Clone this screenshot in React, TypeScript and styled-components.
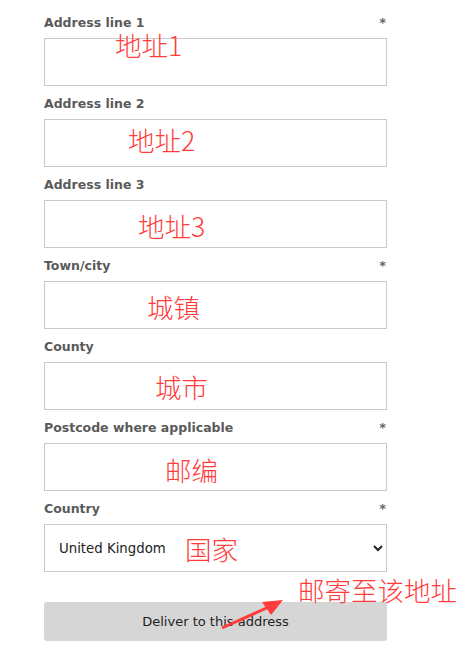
import React from 'react';
import styled, { createGlobalStyle } from 'styled-components';

const GlobalStyle = createGlobalStyle`
  html, body {
    margin: 0;
    padding: 0;
    background: #ffffff;
  }
  body {
    font-family: 'DejaVu Sans', 'Liberation Sans', sans-serif;
  }
`;

const Page = styled.div`
  position: relative;
  width: 471px;
  height: 645px;
  overflow: hidden;
  padding: 13px 0 0 44px;
  box-sizing: border-box;
`;

const Form = styled.form`
  width: 343px;
  display: flex;
  flex-direction: column;
`;

const Field = styled.div`
  display: flex;
  flex-direction: column;
  margin-bottom: 8px;
`;

const LabelRow = styled.div`
  display: flex;
  justify-content: space-between;
  align-items: center;
  height: 18px;
  margin-bottom: 7px;
`;

const Label = styled.label`
  font-size: 12.5px;
  font-weight: 700;
  color: #5a5a5a;
`;

const Required = styled.span`
  font-size: 13px;
  font-weight: 700;
  color: #666;
  padding-right: 1px;
`;

const TextInput = styled.input`
  height: 48px;
  box-sizing: border-box;
  border: 1px solid #c9c9c9;
  border-radius: 0;
  padding: 0 14px;
  font-family: inherit;
  font-size: 13px;
  outline: none;
`;

const Select = styled.select`
  height: 48px;
  box-sizing: border-box;
  border: 1px solid #c9c9c9;
  border-radius: 0;
  padding: 0 10px;
  font-family: inherit;
  font-size: 13.3px;
  color: #222;
  background: #fff;
  outline: none;
`;

const Button = styled.button`
  margin-top: 22px;
  height: 39px;
  border: none;
  border-radius: 3px;
  background: #d6d6d6;
  color: #222;
  font-family: inherit;
  font-size: 13px;
  cursor: pointer;
`;

const Note = styled.span<{ $x: number; $y: number }>`
  position: absolute;
  left: ${({ $x }) => $x}px;
  top: ${({ $y }) => $y}px;
  font-family: 'Noto Sans CJK SC', sans-serif;
  font-weight: 300;
  font-size: 26.5px;
  line-height: 30px;
  color: #ff3b3b;
  pointer-events: none;
  white-space: nowrap;
`;

const Arrow = styled.svg`
  position: absolute;
  left: 215px;
  top: 595px;
  pointer-events: none;
`;

const fields = [
  { label: 'Address line 1', required: true },
  { label: 'Address line 2', required: false },
  { label: 'Address line 3', required: false },
  { label: 'Town/city', required: true },
  { label: 'County', required: false },
  { label: 'Postcode where applicable', required: true },
];

const notes = [
  { text: '地址1', x: 115, y: 30 },
  { text: '地址2', x: 128, y: 125 },
  { text: '地址3', x: 138, y: 211 },
  { text: '城镇', x: 147, y: 292 },
  { text: '城市', x: 155, y: 372 },
  { text: '邮编', x: 165, y: 455 },
  { text: '国家', x: 185, y: 534 },
  { text: '邮寄至该地址', x: 298, y: 575 },
];

export default function App() {
  return (
    <Page>
      <GlobalStyle />
      <Form onSubmit={(e) => e.preventDefault()}>
        {fields.map((f) => (
          <Field key={f.label}>
            <LabelRow>
              <Label>{f.label}</Label>
              {f.required && <Required>*</Required>}
            </LabelRow>
            <TextInput type="text" />
          </Field>
        ))}
        <Field>
          <LabelRow>
            <Label>Country</Label>
            <Required>*</Required>
          </LabelRow>
          <Select defaultValue="GB">
            <option value="GB">United Kingdom</option>
          </Select>
        </Field>
        <Button type="submit">Deliver to this address</Button>
      </Form>
      {notes.map((n) => (
        <Note key={n.text} $x={n.x} $y={n.y}>
          {n.text}
        </Note>
      ))}
      <Arrow width="75" height="40" viewBox="0 0 75 40">
        <line x1="7" y1="33" x2="56" y2="11" stroke="#ff3b3b" strokeWidth="3" />
        <polygon points="68,5 47,7 56,20" fill="#ff3b3b" />
      </Arrow>
    </Page>
  );
}
